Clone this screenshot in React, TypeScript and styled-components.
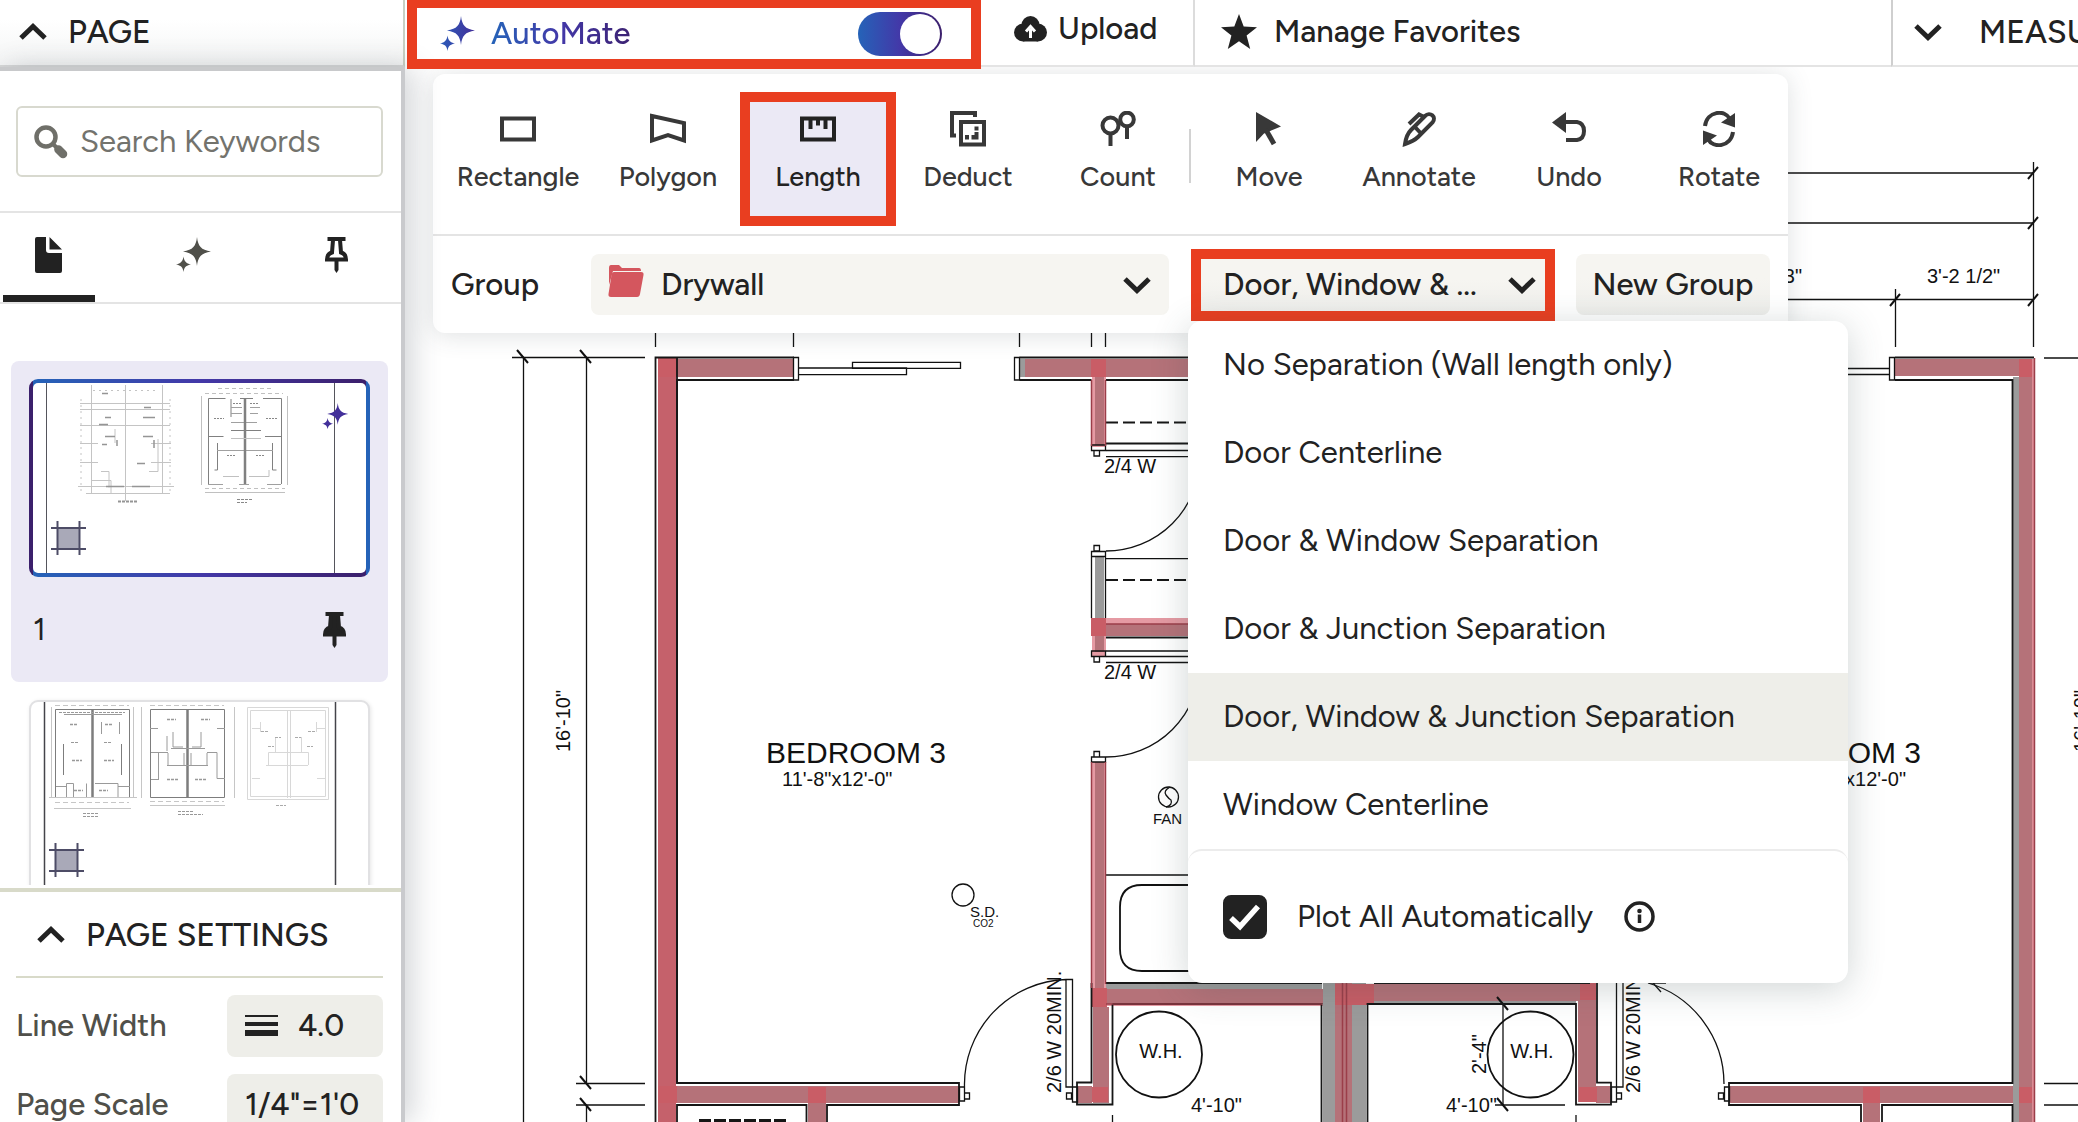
import React, { useState } from "react";
import styled, { createGlobalStyle, css } from "styled-components";

const ink = "#222222";
const beige = "#f6f5f1";
const stone = "#eeeee9";
const lilac = "#ebe9f5";
const callout = "#e93e20";
const brand = "linear-gradient(90deg, #2563b8, #4338a8 50%, #3b1f6b)";

const GlobalStyle = createGlobalStyle`
  *, *::before, *::after { box-sizing: border-box; }
  body {
    margin: 0;
    color: ${ink};
    background: #fff;
    font-family: Figtree, Lato, "Open Sans", sans-serif;
    font-size: 31px;
    line-height: 36px;
    overflow: hidden;
  }
  button, input, select { font: inherit; color: inherit; }
  button { border: 0; padding: 0; background: none; cursor: pointer; }
  svg { display: block; flex: none; }
`;

const Shell = styled.div`
  display: flex;
  flex-direction: column;
  height: 100vh;
  overflow: hidden;
`;

/* ---------- header ---------- */

const Header = styled.header`
  display: flex;
  flex: none;
  height: 67px;
`;

const HeaderCell = styled.div`
  display: flex;
  align-items: center;
  border-bottom: 2px solid #e4e4e4;
  padding-bottom: 2px;
  white-space: nowrap;
`;

const PageCell = styled(HeaderCell)`
  flex: none;
  width: 405px;
  padding-left: 18px;
  border-right: 2px solid #c8d0c4;
  border-bottom-color: #d6d7d7;
  background: linear-gradient(#fff 30%, #f4f5f5);
`;

const AutoMateCell = styled(HeaderCell)`
  position: relative;
  z-index: 4;
  flex: none;
  width: 574px;
  height: 69px;
  margin-left: 2px;
  padding: 0 29px 0 23px;
  border: 10px solid ${callout};
  border-top-width: 8px;
  gap: 16px;
`;

const UploadCell = styled(HeaderCell)`
  flex: none;
  width: 214px;
  padding: 0 0 8px 33px;
  border-right: 2px solid #dcdcdc;
`;

const FavoritesCell = styled(HeaderCell)`
  flex: 1;
  min-width: 0;
  padding-left: 26px;
`;

const MeasureCell = styled(HeaderCell)`
  flex: none;
  width: 187px;
  overflow: hidden;
  padding-left: 20px;
  border-left: 2px solid #cfcfcf;
`;

const HeaderButton = styled.button<{ $gap: number; $title?: boolean }>`
  display: flex;
  align-items: center;
  gap: ${(p) => p.$gap}px;
  font-size: ${(p) => (p.$title ? 32 : 31)}px;
  font-weight: 500;
`;

const GradientLabel = styled.label`
  flex: 1;
  font-weight: 500;
  color: transparent;
  background: linear-gradient(90deg, #2563b8, #4338a8 70px, #3b1f6b 150px);
  background-clip: text;
  -webkit-background-clip: text;
`;

const Toggle = styled.input`
  appearance: none;
  margin: 0;
  width: 84px;
  height: 44px;
  border-radius: 22px;
  border: 2px solid transparent;
  background: linear-gradient(90deg, #2563b8, #4338a8 50%, #3b1f6b) border-box;
  cursor: pointer;
  display: flex;
  justify-content: flex-end;
  &::after {
    content: "";
    width: 40px;
    height: 40px;
    border-radius: 50%;
    background: #fff;
  }
  &:not(:checked) { justify-content: flex-start; }
`;

/* ---------- body and sidebar ---------- */

const Body = styled.div`
  display: flex;
  flex: 1;
  min-height: 0;
`;

const Sidebar = styled.aside`
  position: relative;
  z-index: 2;
  display: flex;
  flex-direction: column;
  flex: none;
  width: 405px;
  border-top: 4px solid #c8c9cb;
  border-right: 4px solid #c9cacd;
  background: #fff;
  box-shadow: 8px 0 26px rgba(60, 70, 80, 0.22);
`;

const SearchArea = styled.div`
  flex: none;
  padding: 35px 18px 34px 16px;
  border-bottom: 2px solid #e4e4e4;
`;

const SearchBox = styled.label`
  display: flex;
  align-items: center;
  gap: 12px;
  height: 71px;
  padding: 0 16px;
  border: 2px solid #d8d9cf;
  border-radius: 6px;
`;

const SearchInput = styled.input`
  flex: 1;
  min-width: 0;
  border: 0;
  padding: 0;
  outline: 0;
  background: none;
  &::placeholder { color: #73736d; opacity: 1; }
`;

const Tabs = styled.div`
  display: flex;
  flex: none;
  justify-content: space-between;
  height: 91px;
  padding: 0 18px 0 3px;
  border-bottom: 2px solid #e4e4e4;
`;

const Tab = styled.button<{ $active?: boolean }>`
  display: flex;
  justify-content: center;
  width: 92px;
  padding-top: 24px;
  border-bottom: 7px solid ${(p) => (p.$active ? ink : "transparent")};
  border-radius: 4px 4px 0 0;
`;

const PageList = styled.div`
  flex: 1;
  min-height: 0;
  overflow: hidden;
  margin-bottom: 3px;
  padding: 57px 13px 0 11px;
`;

const PageCard = styled.article<{ $selected?: boolean }>`
  height: 321px;
  padding: 18px;
  border-radius: 8px;
  background: ${(p) => (p.$selected ? lilac : "transparent")};
`;

const Thumb = styled.div<{ $selected?: boolean }>`
  height: 198px;
  overflow: hidden;
  border-radius: 9px;
  ${(p) =>
    p.$selected
      ? css`
          border: 4px solid transparent;
          background: linear-gradient(#fff, #fff) padding-box, ${brand} padding-box border-box;
        `
      : css`
          border: 2px solid #e1e1e3;
          background: #fff;
          box-shadow: 1px 1px 4px rgba(0, 0, 0, 0.1);
        `}
`;

const CardFoot = styled.div`
  display: flex;
  justify-content: space-between;
  align-items: center;
  height: 105px;
  padding: 0 23px 0 4px;
`;

const Settings = styled.section`
  flex: 0 0 234px;
  overflow: hidden;
  padding: 0 18px 0 16px;
  border-top: 4px solid #d8dac9;
`;

const SettingsHead = styled.button`
  display: flex;
  align-items: center;
  gap: 20px;
  width: 100%;
  height: 86px;
  padding: 2px 0 0 20px;
  border-bottom: 2px solid #d8dac9;
  font-size: 32px;
  font-weight: 500;
  white-space: nowrap;
`;

const SettingRow = styled.div`
  display: flex;
  align-items: center;
  justify-content: space-between;
  height: 62px;
  margin: 17px 0;
  color: #50504a;
  font-weight: 500;
`;

const SettingValue = styled.button`
  display: flex;
  align-items: center;
  gap: 20px;
  width: 156px;
  height: 62px;
  padding: 0 18px;
  border-radius: 8px;
  background: ${stone};
  color: ${ink};
  font-weight: 500;
  white-space: nowrap;
`;

/* ---------- canvas and toolbar ---------- */

const Canvas = styled.main`
  position: relative;
  flex: 1;
  min-width: 0;
  overflow: hidden;
`;

const Drawing = styled.svg`
  width: 100%;
  height: 100%;
  font-family: "Liberation Sans", Arial, sans-serif;
`;

const Toolbar = styled.div`
  position: absolute;
  top: 7px;
  left: 28px;
  border-radius: 12px;
  background: #fff;
  box-shadow: 0 2px 24px rgba(60, 70, 80, 0.17);
`;

const ToolRow = styled.div`
  display: flex;
  align-items: flex-start;
  height: 162px;
  padding: 28px 1px 0 17px;
  border-bottom: 2px solid #e4e4e4;
`;

const ToolGroup = styled.div`
  display: flex;
  gap: 14px;
`;

const ToolSeparator = styled.span`
  width: 2px;
  height: 54px;
  margin: 27px 10px 0 3px;
  background: #d2d2d2;
`;

const Tool = styled.button<{ $active?: boolean }>`
  display: flex;
  flex-direction: column;
  align-items: center;
  gap: 14px;
  width: 136px;
  height: 114px;
  padding-top: 9px;
  font-size: 27px;
  line-height: 32px;
  font-weight: 500;
  color: ${(p) => (p.$active ? ink : "#383838")};
  background: ${(p) => (p.$active ? lilac : "transparent")};
  outline: ${(p) => (p.$active ? `10px solid ${callout}` : "0")};
`;

const GroupRow = styled.div`
  display: flex;
  align-items: center;
  height: 97px;
  padding: 0 18px;
  font-weight: 500;
`;

const GroupLabel = styled.label`
  width: 140px;
`;

const SelectBox = styled.div`
  position: relative;
  display: flex;
  align-items: center;
  width: 578px;
  height: 61px;
  border-radius: 8px;
  background: ${beige};
`;

const SelectIcon = styled.span<{ $side: "left" | "right" }>`
  position: absolute;
  pointer-events: none;
  ${(p) => (p.$side === "left" ? "left: 17px; bottom: 18px;" : "right: 17px;")}
`;

const Select = styled.select`
  appearance: none;
  flex: 1;
  height: 100%;
  padding: 0 60px 0 70px;
  border: 0;
  background: none;
  font-weight: 500;
`;

const SeparationField = styled.div`
  position: relative;
  width: 364px;
  margin: 0 21px 0 22px;
`;

const SeparationButton = styled.button`
  display: flex;
  align-items: center;
  justify-content: space-between;
  width: 100%;
  height: 72px;
  padding: 0 8px 0 22px;
  border: 10px solid ${callout};
  background: linear-gradient(${beige} 40%, #efefec);
  font-weight: 500;
  white-space: nowrap;
`;

const NewGroup = styled.button`
  width: 194px;
  height: 61px;
  border-radius: 8px;
  background: linear-gradient(${beige} 40%, #efefec);
  font-weight: 500;
  white-space: nowrap;
`;

const Menu = styled.div`
  position: absolute;
  top: 100%;
  left: -3px;
  width: 660px;
  border-radius: 14px;
  background: #fff;
  box-shadow: 0 6px 36px rgba(60, 80, 80, 0.24);
  font-weight: 400;
`;

const Options = styled.ul`
  list-style: none;
  margin: 0;
  padding: 0;
`;

const Option = styled.li<{ $selected: boolean }>`
  display: flex;
  align-items: center;
  height: 88px;
  padding: 0 35px;
  cursor: pointer;
  background: ${(p) => (p.$selected ? stone : "transparent")};
`;

const MenuFoot = styled.div`
  display: flex;
  align-items: center;
  height: 134px;
  padding: 0 35px;
  border-top: 2px solid #ececec;
  border-radius: 14px;
`;

const CheckLabel = styled.label`
  display: flex;
  align-items: center;
  gap: 30px;
  margin-right: 31px;
`;

const CheckBox = styled.span`
  position: relative;
  width: 44px;
  height: 44px;
  svg {
    position: absolute;
    inset: 0;
    pointer-events: none;
  }
`;

const CheckInput = styled.input`
  appearance: none;
  display: block;
  width: 44px;
  height: 44px;
  margin: 0;
  border: 3px solid ${ink};
  border-radius: 8px;
  &:checked { background: ${ink}; }
  &:not(:checked) + svg { display: none; }
`;

/* ---------- icons ---------- */

const Chevron = ({ up = false }: { up?: boolean }) => (
  <svg width="30" height="20" viewBox="0 0 30 20" aria-hidden="true">
    <path d={up ? "M3 16 15 4.500 27 16" : "M3 4 15 15.500 27 4"} fill="none" stroke={ink} strokeWidth="5" />
  </svg>
);

const Sparkles = ({ size = 35, fill = "url(#brand)" }: { size?: number; fill?: string }) => (
  <svg width={size} height={size} viewBox="0 0 35 35" aria-hidden="true">
    <defs>
      <linearGradient id="brand" x1="0" x2="1">
        <stop offset="0" stopColor="#2b5cba" />
        <stop offset="1" stopColor="#43309a" />
      </linearGradient>
    </defs>
    <path
      fill={fill}
      d="M21 0c1 9 4 13 14 14.500C25 16 22 20 21 29c-1-9-4-13-14-14.500C17 13 20 9 21 0ZM7.500 19.500c.6 4.500 2.500 7 7.500 8-5 .8-6.900 3-7.500 7.500-.6-4.500-2.500-6.700-7.500-7.500 5-1 6.900-3.500 7.500-8Z"
    />
  </svg>
);

const Cloud = () => (
  <svg width="33" height="26" viewBox="0 0 33 26" aria-hidden="true">
    <circle cx="9" cy="16.500" r="9" fill={ink} />
    <circle cx="24" cy="16.500" r="9" fill={ink} />
    <circle cx="16.500" cy="9" r="9" fill={ink} />
    <path d="M9 12h15v13.500H9z" fill={ink} />
    <path d="M16.500 22V13M12 15.500l4.500-5 4.500 5" fill="none" stroke="#fff" strokeWidth="3" />
  </svg>
);

const Star = () => (
  <svg width="36" height="35" viewBox="0 0 36 35" aria-hidden="true">
    <path fill={ink} d="m18 0 4.700 12.600L36 13.200 25.600 21.400 29.200 35 18 27.200 6.800 35l3.600-13.600L0 13.200l13.300-.6Z" />
  </svg>
);

const Search = () => (
  <svg width="34" height="34" viewBox="0 0 34 34" aria-hidden="true">
    <circle cx="12" cy="12" r="9.500" fill="none" stroke="#6f6f69" strokeWidth="4.500" />
    <path d="m18.500 18.500 4 4" stroke="#6f6f69" strokeWidth="4" />
    <path d="m24.500 24.500 4.500 4.500" stroke="#6f6f69" strokeWidth="8.500" strokeLinecap="round" />
  </svg>
);

const Doc = () => (
  <svg width="28" height="36" viewBox="0 0 28 36" aria-hidden="true">
    <path fill={ink} d="M2 0h9v13q0 3 3 3h13v18q0 2-2 2H2q-2 0-2-2V2q0-2 2-2Zm12.500 0L27 12.500H14.500Z" />
  </svg>
);

const Pin = ({ solid = false }: { solid?: boolean }) => (
  <svg width="24" height="36" viewBox="0 0 24 36" aria-hidden="true">
    <path
      fill={solid ? ink : "none"}
      stroke={ink}
      strokeWidth="4"
      d="M2.500 2h18M8 3 7 15.500q-5 1.500-5 7h19q0-5.500-5-7L15 3"
    />
    <path d="M9.500 23h4v10l-2 3-2-3Z" fill={ink} />
  </svg>
);

const Folder = () => (
  <svg width="36" height="32" viewBox="0 0 36 32" aria-hidden="true">
    <path fill="#d4565e" d="M1 3q0-3 2-3h8l3 3h17q2 0 2 3H5L1 20Z" />
    <path fill="#d4565e" d="M6 7h27q3 0 2.500 3L32 29q-.5 3-3 3H3q-3 0-2.500-3L3.500 10q.5-3 2.500-3Z" />
  </svg>
);

const LineWeights = () => (
  <svg width="33" height="22" viewBox="0 0 33 22" aria-hidden="true">
    <path fill={ink} d="M0 0h33v2H0zM0 7h33v4H0zM0 15h33v6H0z" />
  </svg>
);

const Info = () => (
  <svg width="31" height="31" viewBox="0 0 31 31" role="img" aria-label="More information">
    <circle cx="15.500" cy="15.500" r="13.500" fill="none" stroke={ink} strokeWidth="3.500" />
    <circle cx="15.500" cy="10" r="2.300" fill={ink} />
    <path d="M15.500 13.500v8.500" stroke={ink} strokeWidth="3.500" />
  </svg>
);

const toolIcons: Record<string, React.ReactNode> = {
  Rectangle: <path d="M2 7.500h32v21H2z" />,
  Polygon: <path d="m2 5 32 7v17.500L18 24 2 29.500Z" />,
  Length: <path d="M2 7.500h32v21H2zM10.500 8v10M18 8v6.500M25.500 8v10" />,
  Deduct: (
    <>
      <path d="M25 6V2H2v22.500h4" />
      <path d="M11 11h23v22.500H11z" />
      <path d="M15 24h4v4.500h-4zM21.500 24h3v-3h4v7.500h-7zM24.500 15.500h4v4h-4z" fill="currentColor" stroke="none" />
    </>
  ),
  Count: (
    <>
      <circle cx="10.500" cy="14.500" r="8" />
      <circle cx="27" cy="8.500" r="6.800" />
      <path d="M10.500 22v13M27 15v13" />
    </>
  ),
  Move: (
    <>
      <path d="M5 1v30l8-8.500L30 15.500Z" fill="currentColor" stroke="none" />
      <path d="m14.500 18 8.500 15" strokeWidth="5" />
    </>
  ),
  Annotate: (
    <>
      <path d="M4 33c1-7 3-11 6-14L24 5c5-5 12 1 7.500 6.500L17 26c-3 3-7 5-13 7ZM13.500 15.500l7.500 8" />
      <path d="M8 13 18 3.500l6 3" />
    </>
  ),
  Undo: (
    <>
      <path d="M12 11h14q7 1 7 9t-7 9H15" />
      <path d="M15 1v21L1 11.500Z" fill="currentColor" stroke="none" />
    </>
  ),
  Rotate: (
    <>
      <path d="M4 15C6 0 24-2 29 8M32 21c-2 15-20 17-25 7" />
      <path d="M34 2v14.500l-14-5ZM2 34V19.500l14 5Z" fill="currentColor" stroke="none" />
    </>
  ),
};

const ToolIcon = ({ name }: { name: string }) => (
  <svg width="36" height="36" viewBox="0 0 36 36" fill="none" stroke="currentColor" strokeWidth="4" aria-hidden="true">
    {toolIcons[name]}
  </svg>
);

/* ---------- page thumbnails ---------- */

const CropMark = ({ x, y }: { x: number; y: number }) => (
  <g transform={`translate(${x} ${y})`}>
    <path d="M6 6h23v22H6z" fill="#a9a9b8" />
    <path d="M6.500 0v34M28.500 0v34M0 7h35M0 28h35" stroke="#4d4c66" strokeWidth="2" />
  </g>
);

const PlanOneThumb = () => (
  <svg width="333" height="190" viewBox="0 0 333 190" fill="none">
    <path d="M13.500 0v190M301.500 0v190" stroke="#55555c" />
    <g stroke="#c4c4c4">
      <path d="M58.500 2v108M92.500 2v116M129.500 2v108M47 20.500h90M47 26.500h90M47 42.500h90M45 103.500h96M53 110.500h84" />
      <path d="M47 60.500h18M118 60.500h20M47 79.500h18M118 79.500h20M58 97.500h20v13M68 88.500h8v16M116 88.500h9V56M82 46v14" />
      <path d="M48 16v92M137 16v92M60 7.500h64" strokeDasharray="2 4" />
    </g>
    <g stroke="#959595">
      <path d="M72 53.500h10M110 53.500h10M73 103.500h18M99 103.500h18M69 10.500h6M111 24.500h7M72 34.500h6M110 34.500h12M66 41.500h9M69 61.500h5M104 80.500h8M84 57v6M121 57v8" strokeWidth="1.500" />
      <path d="M85 118.500h20" strokeWidth="2" strokeDasharray="3 1" />
    </g>
    <g stroke="#808080">
      <path d="M175.500 101V15.500h17M207 15.500h13M230 15.500h18.500V101M198 16v18M198 47.500h30M175.500 53.500h15M232 53.500h17M184.500 60v27h-3M239.500 60v27h4" />
      <path d="M175 101.500h15M206 101.500h10M234 101.500h14M198 24.500h11M198 30.500h11M217 24.500h10M217 30.500h8M198 39.500h26M184 67.500h56" stroke="#a0a0a0" />
      <path d="M212 15v86" strokeWidth="2.500" />
    </g>
    <g stroke="#c0c0c0">
      <path d="M168.500 13v89M254.500 13v89M172 109.500h80M190 93.500h16M216 93.500h20V87M198 55.500h30" />
      <path d="M172 10.500h78M172 105.500h80M185 5.500h54" strokeDasharray="4 3" />
      <path d="M181 35.500h10M233 35.500h11M194 72.500h8M223 72.500h8M200 20.500h8M217 20.500h8" stroke="#888" strokeDasharray="2 1" />
      <path d="M204 116.500h15M204 119.500h10" stroke="#888" strokeDasharray="3 1" />
    </g>
    <CropMark x={18} y={138} />
    <g transform="translate(289 20) scale(.75)">
      <path
        fill="#43309a"
        d="M21 0c1 9 4 13 14 14.500C25 16 22 20 21 29c-1-9-4-13-14-14.500C17 13 20 9 21 0ZM7.500 19.500c.6 4.500 2.500 7 7.500 8-5 .8-6.900 3-7.500 7.500-.6-4.500-2.500-6.700-7.500-7.500 5-1 6.900-3.500 7.500-8Z"
      />
    </g>
  </svg>
);

const PlanTwoThumb = () => (
  <svg width="337" height="194" viewBox="0 0 337 194" fill="none">
    <path d="M13.500 0v194M304.500 0v194" stroke="#44444a" strokeWidth="1.500" />
    <g stroke="#7d7d7d">
      <path d="M24.500 7.500h74v88h-74zM119.500 7.500h74v88h-74z" />
      <path d="M61.500 7v88M156.500 7v88" strokeWidth="2.500" />
      <path d="M32.500 42v31M90.500 42v31" />
    </g>
    <g stroke="#9a9a9a">
      <path d="M35.500 95V81.500h7V95M55.500 95V81.500M64 81.500h23V95M25 84.500h11M87 84.500h12M33 12.500h58M70.500 20v12M88.500 20v12" />
      <path d="M127.500 50v28M120 50.500h17M176 50.500h10v26h8M120 77.500h7M137 51v12.500h16V51M160 51v12.500h16V51M136 63.500h41M140 46.500h34M136 34v15M142 30v15h10M170 30v15h-9M127 26.500h-8M186 26.500h8" />
    </g>
    <g stroke="#999" strokeDasharray="3 1">
      <path d="M39 22.500h8M74 22.500h8M41 58.500h10M73 58.500h10M43 88.500h9M68 88.500h9M136 17.500h9M170 17.500h9M136 77.500h12M164 77.500h12" strokeWidth="1.500" />
      <path d="M28 10.500h66M40 40.500h8M73 40.500h8" />
      <path d="M52 111.500h16M52 114.500h16M147 109.500h16M147 112.500h25" />
    </g>
    <g stroke="#c6c6c6">
      <path d="M20.500 5v91M102.500 5v91M18 95.500h88M23 106.500h77M110.500 5v91M203.500 5v91M119 103.500h75" />
      <path d="M24 3.500h74M24 100.500h74M119 3.500h74M119 99.500h74" strokeDasharray="5 3" />
    </g>
    <g stroke="#d8d8d8">
      <path d="M216.500 5.500h81v92h-81zM219.500 8.500h75v86h-75zM256.500 8v88M259.500 8v88M237.500 63V50.500h40V63M244.500 50V35M270.500 50V35" />
      <path d="M235 63.500h42M221 26.500h8M286 26.500h8M221 76.500h8M286 76.500h8M229.500 20v10M285.500 20v10" />
      <path d="M230 29.500h8M277 29.500h8M244 35.500h6M264 35.500h6M237 44.500h6M276 44.500h6M245 103.500h10" stroke="#aaa" strokeDasharray="3 1" />
    </g>
    <CropMark x={18} y={141} />
  </svg>
);

/* ---------- floor plan ---------- */

const wall = "#b57279";
const solid = "#c5616b";
const joint = "#c95d66";
const blush = "#e59aa3";
const grey = "#9b9b9b";

type Box = [number, number, number, number, string];

const fills: Box[] = [
  [658, 359, 18, 763, solid],
  [676, 359, 118, 18, wall],
  [658, 357, 18, 20, joint],
  [1020, 359, 6, 18, grey],
  [1025, 359, 200, 18, wall],
  [1092, 377, 14, 70, blush],
  [1095, 377, 9, 68, wall],
  [1091, 359, 15, 18, joint],
  [1095, 557, 9, 80, grey],
  [1106, 618, 90, 7, blush],
  [1106, 624, 90, 12, wall],
  [1092, 634, 14, 22, blush],
  [1095, 636, 9, 16, wall],
  [1091, 618, 15, 18, joint],
  [1092, 762, 14, 226, blush],
  [1095, 762, 9, 226, wall],
  [1106, 984, 216, 6, grey],
  [1106, 989, 230, 15, wall],
  [1106, 1004, 230, 2, blush],
  [1093, 1007, 16, 96, wall],
  [1091, 988, 16, 19, joint],
  [1078, 1086, 14, 17, wall],
  [1092, 1087, 16, 15, joint],
  [677, 1086, 282, 17, wall],
  [658, 1086, 19, 17, joint],
  [808, 1103, 18, 19, wall],
  [808, 1087, 18, 16, joint],
  [1323, 983, 12, 139, grey],
  [1335, 983, 17, 139, wall],
  [1352, 983, 14, 139, grey],
  [1374, 984, 222, 17, wall],
  [1368, 1001, 208, 3, grey],
  [1335, 984, 39, 21, joint],
  [1578, 983, 18, 119, wall],
  [1580, 983, 16, 17, joint],
  [1596, 1086, 15, 17, wall],
  [1579, 1087, 18, 15, joint],
  [1729, 1086, 284, 17, wall],
  [1863, 1103, 17, 19, wall],
  [1863, 1087, 17, 16, joint],
  [1895, 359, 124, 17, wall],
  [2013, 377, 6, 745, grey],
  [2019, 377, 13, 745, wall],
  [2032, 359, 3, 763, "#dc8c95"],
  [2019, 359, 13, 18, joint],
  [2019, 1087, 13, 16, joint],
];

const tick = (x: number, y: number, down = false) =>
  down ? `M${x - 6} ${y - 7}l11 13` : `M${x - 5} ${y + 6}l10 -12`;

const FloorPlan = () => (
  <Drawing viewBox="405 67 1673 1055" preserveAspectRatio="xMinYMin slice" role="img" aria-label="Floor plan">
    {fills.map(([x, y, w, h, c], i) => (
      <rect key={i} x={x} y={y} width={w} height={h} fill={c} />
    ))}
    <g fill="none" stroke="#111" strokeWidth="1.300">
      <path d="M512 357.500h133M523.500 357v765M586.500 357v726M586.500 1105v17M576 1083.500h69M576 1105h69" />
      <path d="M655.500 333v14M793.500 333v14M1019.500 333v14M1091.500 333v14M1105.500 333v14" />
      <path d="M1788 173h246M1788 223h246M1788 299.500h246M2033.500 162v185M1895.500 289v58M2044 358h34M2044 1083.500h34M2044 1105h34" />
      <path d={[tick(523, 357, true), tick(586, 357, true), tick(586, 1083, true), tick(586, 1105, true), tick(2033, 173), tick(2033, 223), tick(2033, 300), tick(1895, 300), tick(1503, 1004, true), tick(1503, 1105, true)].join("")} strokeWidth="2" />
      <path d="M1503 1004v101M1495 1105h70M1650 983h16M1653 983l8 9M1112.500 1115v7M1576 1115v7" />
      <path d="M798.500 368h108v6.700h-108zM852.500 362.300h108v6h-108zM793.500 357.500h5v22.500h-5zM1014.500 357.500h5v22.500h-5z" />
      <path d="M1848 368.500h42M1848 374.500h42M1889.500 357.500h5v22.500h-5z" />
      <path d="M1106 450.500h120M1106 456.700h120M1106 651h120M1106 656.500h120M1106 662.500h120M1106 875h120M1106 558.700h120" />
      <path d="M1091.500 556v62M1105.500 556v62M1091.500 445h14v5.500h-14zM1094 450.500h5.500v5.500h-5.500zM1094 545.500h5.500v5.500h-5.500zM1091.500 551.500h14v5h-14zM1091.500 651h14v5.500h-14zM1094 656.500h5.500v5.500h-5.500zM1094 751.500h5.500v5.500h-5.500zM1091.500 757h14v5h-14z" />
      <path d="M1106 551a94 94 0 0 0 94-94M1106 757a94 94 0 0 0 94-94" />
      <path d="M1230 885h-88q-22 0-22 22v42q0 22 22 22h88" strokeWidth="1.800" />
      <path d="M964.500 1087A105 105 0 0 1 1066 979.500h6.500V1087h-6.500V979.500M959.500 1087h5v14h-5zM964.500 1093h5v6h-5zM1066.500 1093h5v6h-5zM1072.500 1087h5v15h-5z" />
      <path d="M1648 983a105 105 0 0 1 76 101M1616.500 983v104h6.500V983M1611.500 1087h5v15h-5zM1616.500 1093h5v6h-5zM1724.500 1087h5v14h-5zM1718.500 1093h5v6h-5z" />
      <circle cx="963" cy="895" r="11" />
      <circle cx="1168.500" cy="797" r="10" />
      <path d="M1170 787q-7 4-4 8t5 5q2 5-5 7" />
      <circle cx="1159" cy="1054.500" r="43" strokeWidth="1.800" />
      <circle cx="1530.500" cy="1054.500" r="43" strokeWidth="1.800" />
    </g>
    <g fill="none" stroke="#161616" strokeWidth="1.800">
      <path d="M655.500 1122V357.500H794M677 1083V380H794M1226 357.500H1019.500M1019.500 380h72M1106 380h120" />
      <path d="M1106 443.500h120M1106 637.500h120M1106 983h216M1112.500 1004h209v118" />
      <path d="M1106 422.500h120M1106 580h120" strokeDasharray="12 5" />
      <path d="M677 1122v-17h129.500v17M827 1122v-17h132V1083H677V357" />
      <path d="M1091.500 983v99.500H1077v22h35.500V1004M1374 983h216M1367.500 1122V1004H1576v100.700h35v-22h-14V983" />
      <path d="M1895 357.500h139M1895 380h117.500v703H1729v22h132v17M1882 1122v-17h130.500v17" />
      <path d="M699 1121h88" strokeWidth="4" strokeDasharray="12 3" />
    </g>
    <g fill="none" stroke="#9b3e49" strokeWidth="1.500">
      <path d="M1091.500 380v66M1105.500 380v66M1106 624h90M1091.500 762v226M1105.500 762v222M1106 1004h216M1342.500 983v139M1346.500 983v139M2034.500 358v764" />
    </g>
    <g fill="#111" fontSize="20">
      <text x="766" y="763" fontSize="30">BEDROOM 3</text>
      <text x="782" y="786">11'-8"x12'-0"</text>
      <text x="1921" y="763" fontSize="30" textAnchor="end">BEDROOM 3</text>
      <text x="1906" y="786" textAnchor="end">11'-8"x12'-0"</text>
      <text x="1104" y="473">2/4 W</text>
      <text x="1104" y="679">2/4 W</text>
      <text x="1802" y="283" fontSize="20" textAnchor="end">3"</text>
      <text x="1927" y="283">3'-2 1/2"</text>
      <text x="1161" y="1058" textAnchor="middle">W.H.</text>
      <text x="1532" y="1058" textAnchor="middle">W.H.</text>
      <text x="1191" y="1112">4'-10"</text>
      <text x="1446" y="1112">4'-10"</text>
      <text x="1153" y="824" fontSize="15">FAN</text>
      <text x="970" y="917" fontSize="15">S.D.</text>
      <text x="973" y="927" fontSize="10">CO2</text>
      <text transform="translate(570 752) rotate(-90)">16'-10"</text>
      <text transform="translate(2088 752) rotate(-90)">16'-10"</text>
      <text transform="translate(1061 1093) rotate(-90)">2/6 W 20MIN.</text>
      <text transform="translate(1640 1093) rotate(-90)">2/6 W 20MIN.</text>
      <text transform="translate(1486 1074) rotate(-90)">2'-4"</text>
    </g>
  </Drawing>
);

/* ---------- page ---------- */

const drawTools = ["Rectangle", "Polygon", "Length", "Deduct", "Count"];
const editTools = ["Move", "Annotate", "Undo", "Rotate"];
const separations = [
  "No Separation (Wall length only)",
  "Door Centerline",
  "Door & Window Separation",
  "Door & Junction Separation",
  "Door, Window & Junction Separation",
  "Window Centerline",
];

export default function App() {
  const [tool, setTool] = useState("Length");
  const [separation, setSeparation] = useState(separations[4]);

  const renderTool = (name: string) => (
    <Tool key={name} $active={tool === name} aria-pressed={tool === name} onClick={() => setTool(name)}>
      <ToolIcon name={name} />
      {name}
    </Tool>
  );

  return (
    <Shell>
      <GlobalStyle />
      <Header>
        <PageCell>
          <HeaderButton $gap={20} $title>
            <Chevron up />
            PAGE
          </HeaderButton>
        </PageCell>
        <AutoMateCell>
          <Sparkles />
          <GradientLabel htmlFor="automate">AutoMate</GradientLabel>
          <Toggle id="automate" type="checkbox" role="switch" defaultChecked />
        </AutoMateCell>
        <UploadCell>
          <HeaderButton $gap={11}>
            <Cloud />
            Upload
          </HeaderButton>
        </UploadCell>
        <FavoritesCell>
          <HeaderButton $gap={17}>
            <Star />
            Manage Favorites
          </HeaderButton>
        </FavoritesCell>
        <MeasureCell>
          <HeaderButton $gap={36} $title>
            <Chevron />
            MEASUREMENTS
          </HeaderButton>
        </MeasureCell>
      </Header>

      <Body>
        <Sidebar>
          <SearchArea>
            <SearchBox>
              <Search />
              <SearchInput type="text" placeholder="Search Keywords" aria-label="Search Keywords" />
            </SearchBox>
          </SearchArea>
          <Tabs>
            <Tab $active aria-label="Pages">
              <Doc />
            </Tab>
            <Tab aria-label="AutoMate pages">
              <Sparkles fill="#50504a" />
            </Tab>
            <Tab aria-label="Pinned pages">
              <Pin />
            </Tab>
          </Tabs>
          <PageList>
            <PageCard $selected>
              <Thumb $selected>
                <PlanOneThumb />
              </Thumb>
              <CardFoot>
                <span>1</span>
                <button aria-label="Unpin page">
                  <Pin solid />
                </button>
              </CardFoot>
            </PageCard>
            <PageCard>
              <Thumb>
                <PlanTwoThumb />
              </Thumb>
            </PageCard>
          </PageList>
          <Settings>
            <SettingsHead>
              <Chevron up />
              PAGE SETTINGS
            </SettingsHead>
            <SettingRow>
              <span id="line-width">Line Width</span>
              <SettingValue aria-describedby="line-width">
                <LineWeights />
                4.0
              </SettingValue>
            </SettingRow>
            <SettingRow>
              <span id="page-scale">Page Scale</span>
              <SettingValue aria-describedby="page-scale">1/4"=1'0</SettingValue>
            </SettingRow>
          </Settings>
        </Sidebar>

        <Canvas>
          <FloorPlan />
          <Toolbar>
            <ToolRow>
              <ToolGroup>{drawTools.map(renderTool)}</ToolGroup>
              <ToolSeparator />
              <ToolGroup>{editTools.map(renderTool)}</ToolGroup>
            </ToolRow>
            <GroupRow>
              <GroupLabel htmlFor="group">Group</GroupLabel>
              <SelectBox>
                <SelectIcon $side="left">
                  <Folder />
                </SelectIcon>
                <Select id="group" defaultValue="Drywall">
                  <option>Drywall</option>
                </Select>
                <SelectIcon $side="right">
                  <Chevron />
                </SelectIcon>
              </SelectBox>
              <SeparationField>
                <SeparationButton aria-haspopup="listbox" aria-expanded="true">
                  Door, Window &amp; ...
                  <Chevron />
                </SeparationButton>
                <Menu>
                  <Options role="listbox" aria-label="Separation">
                    {separations.map((name) => (
                      <Option
                        key={name}
                        role="option"
                        aria-selected={name === separation}
                        $selected={name === separation}
                        onClick={() => setSeparation(name)}
                      >
                        {name}
                      </Option>
                    ))}
                  </Options>
                  <MenuFoot>
                    <CheckLabel>
                      <CheckBox>
                        <CheckInput type="checkbox" defaultChecked />
                        <svg width="44" height="44" viewBox="0 0 44 44" aria-hidden="true">
                          <path d="m8 23 9 8.500L35 11.500" fill="none" stroke="#fff" strokeWidth="5.500" />
                        </svg>
                      </CheckBox>
                      Plot All Automatically
                    </CheckLabel>
                    <Info />
                  </MenuFoot>
                </Menu>
              </SeparationField>
              <NewGroup>New Group</NewGroup>
            </GroupRow>
          </Toolbar>
        </Canvas>
      </Body>
    </Shell>
  );
}
